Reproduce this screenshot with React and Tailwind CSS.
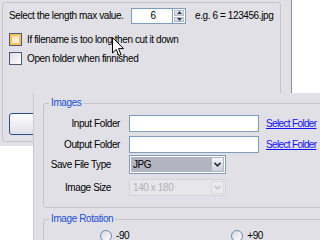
import React from "react";

const font = "font-['Liberation_Sans',Arial,sans-serif] text-[10px] tracking-[-0.4px] leading-[12px] text-black";

function Chevron({ color = "#2b2b3a" }) {
  return (
    <svg width="7" height="5" viewBox="0 0 7 5">
      <path d="M0.5 0.8 L3.5 3.8 L6.5 0.8" fill="none" stroke={color} strokeWidth="1.6" />
    </svg>
  );
}

function Checkbox({ hover }) {
  return (
    <span className="w-[13px] h-[13px] border border-[#4c5a78] bg-gradient-to-br from-[#dcdce2] to-white flex items-center justify-center shrink-0">
      {hover && <span className="w-[11px] h-[11px] border-2 border-[#f7c25c] bg-gradient-to-br from-[#f4e2b8] to-[#fdf7e6]" />}
    </span>
  );
}

function Radio() {
  return (
    <span className="w-[12px] h-[12px] rounded-full border border-[#6e8bab] bg-gradient-to-br from-[#d8d9e0] to-white shrink-0" />
  );
}

function Spinner() {
  return (
    <div className="flex flex-col w-[13px] h-[16px] border-y border-r border-[#7f9db9] bg-white p-[1px] gap-[1px]">
      <div className="flex-1 bg-gradient-to-b from-[#eef0f8] to-[#c9cddc] border border-[#b7bccb] flex items-center justify-center">
        <svg width="5" height="3" viewBox="0 0 5 3"><path d="M0 3 L2.5 0 L5 3 Z" fill="#3b3d4d" /></svg>
      </div>
      <div className="flex-1 bg-gradient-to-b from-[#eef0f8] to-[#c9cddc] border border-[#b7bccb] flex items-center justify-center">
        <svg width="5" height="3" viewBox="0 0 5 3"><path d="M0 0 L2.5 3 L5 0 Z" fill="#3b3d4d" /></svg>
      </div>
    </div>
  );
}

function Cursor() {
  return (
    <svg className="absolute left-[112px] top-[37px]" width="13" height="20" viewBox="0 0 13 20">
      <path d="M0.5 0.5 L0.5 16 L4.2 12.4 L6.8 18.5 L9 17.6 L6.5 11.6 L11.5 11.6 Z" fill="white" stroke="black" strokeWidth="1" strokeLinejoin="miter" />
    </svg>
  );
}

function FormRow({ label, labelPad, mt, children }) {
  return (
    <div className={`flex items-center ${mt}`}>
      <div className={`w-[85px] text-right ${labelPad}`}>{label}</div>
      {children}
    </div>
  );
}

export default function App() {
  return (
    <div className={`relative w-[320px] h-[240px] overflow-hidden bg-white ${font}`}>
      {/* back window */}
      <div className="absolute left-0 top-0 w-[292px] h-[146px] bg-[#e1e0e6] border-r border-[#8e8e98]">
        <div className="ml-[2px] mt-[2px] w-[279px] h-[140px] border border-[#c4c4cd] rounded-[3px] pl-[6px] pt-[5px] flex flex-col">
          <div className="flex items-center h-[16px]">
            <span className="w-[122px]">Select the length max value.</span>
            <div className="w-[42px] h-[16px] border border-[#7f9db9] bg-white flex items-center justify-center pl-[2px]">6</div>
            <Spinner />
            <span className="ml-[9px]">e.g. 6 = 123456.jpg</span>
          </div>
          <div className="flex items-center mt-[9px] gap-[5px]">
            <Checkbox hover />
            <span>If filename is too long then cut it down</span>
          </div>
          <div className="flex items-center mt-[6px] gap-[5px]">
            <Checkbox />
            <span>Open folder when finnished</span>
          </div>
          <div className="mt-[48px] w-[75px] h-[22px] rounded-[3px] border border-[#2a4f86] bg-gradient-to-b from-white to-[#dfe0e8]" />
        </div>
        <Cursor />
      </div>

      {/* front window */}
      <div className="absolute left-[33px] top-[93px] w-[287px] h-[147px] bg-[#e1e0e6] border-l border-[#c9c9d0] overflow-hidden">
        <fieldset className="ml-[9px] mt-[4px] w-[300px] h-[111px] border border-[#c4c4cd] rounded-[3px]">
          <legend className="ml-[5px] px-[2px] text-[#1a4fd0]">Images</legend>
          <div className="flex flex-col pt-[6px]">
            <FormRow label="Input Folder" labelPad="pr-[9px]" mt="">
              <div className="w-[130px] h-[17px] border border-[#7f9db9] bg-white" />
              <span className="ml-[7px] text-[#1010f0] underline tracking-[-0.65px]">Select Folder</span>
            </FormRow>
            <FormRow label="Output Folder" labelPad="pr-[9px]" mt="mt-[4px]">
              <div className="w-[130px] h-[17px] border border-[#7f9db9] bg-white" />
              <span className="ml-[7px] text-[#1010f0] underline tracking-[-0.65px]">Select Folder</span>
            </FormRow>
            <FormRow label="Save File Type" labelPad="pr-[18px]" mt="mt-[2px]">
              <div className="w-[97px] h-[19px] border border-[#7f9db9] bg-white flex p-[1px]">
                <div className="flex-1 bg-[#b2b4bf] pl-[2px] flex items-center">JPG</div>
                <div className="w-[13px] border border-[#b2b5c6] bg-gradient-to-b from-[#f4f4f8] to-[#cdd0dc] flex items-center justify-center">
                  <Chevron />
                </div>
              </div>
            </FormRow>
            <FormRow label="Image Size" labelPad="pr-[18px]" mt="mt-[5px]">
              <div className="w-[97px] h-[17px] border border-[#d2d2d8] bg-[#e7e6ea] flex p-[1px]">
                <div className="flex-1 pl-[2px] flex items-center text-[#b4b3b8]">140 x 180</div>
                <div className="w-[13px] border border-[#dadade] bg-[#ebebef] flex items-center justify-center">
                  <Chevron color="#c8c8cf" />
                </div>
              </div>
            </FormRow>
          </div>
        </fieldset>
        <fieldset className="ml-[9px] mt-[5px] w-[300px] h-[40px] border border-[#c4c4cd] rounded-[3px]">
          <legend className="ml-[5px] px-[2px] text-[#1a4fd0]">Image Rotation</legend>
          <div className="flex items-center pt-[5px] pl-[56px]">
            <Radio />
            <span className="ml-[4px]">-90</span>
            <span className="ml-[102px] flex items-center">
              <Radio />
              <span className="ml-[4px]">+90</span>
            </span>
          </div>
        </fieldset>
      </div>
    </div>
  );
}
